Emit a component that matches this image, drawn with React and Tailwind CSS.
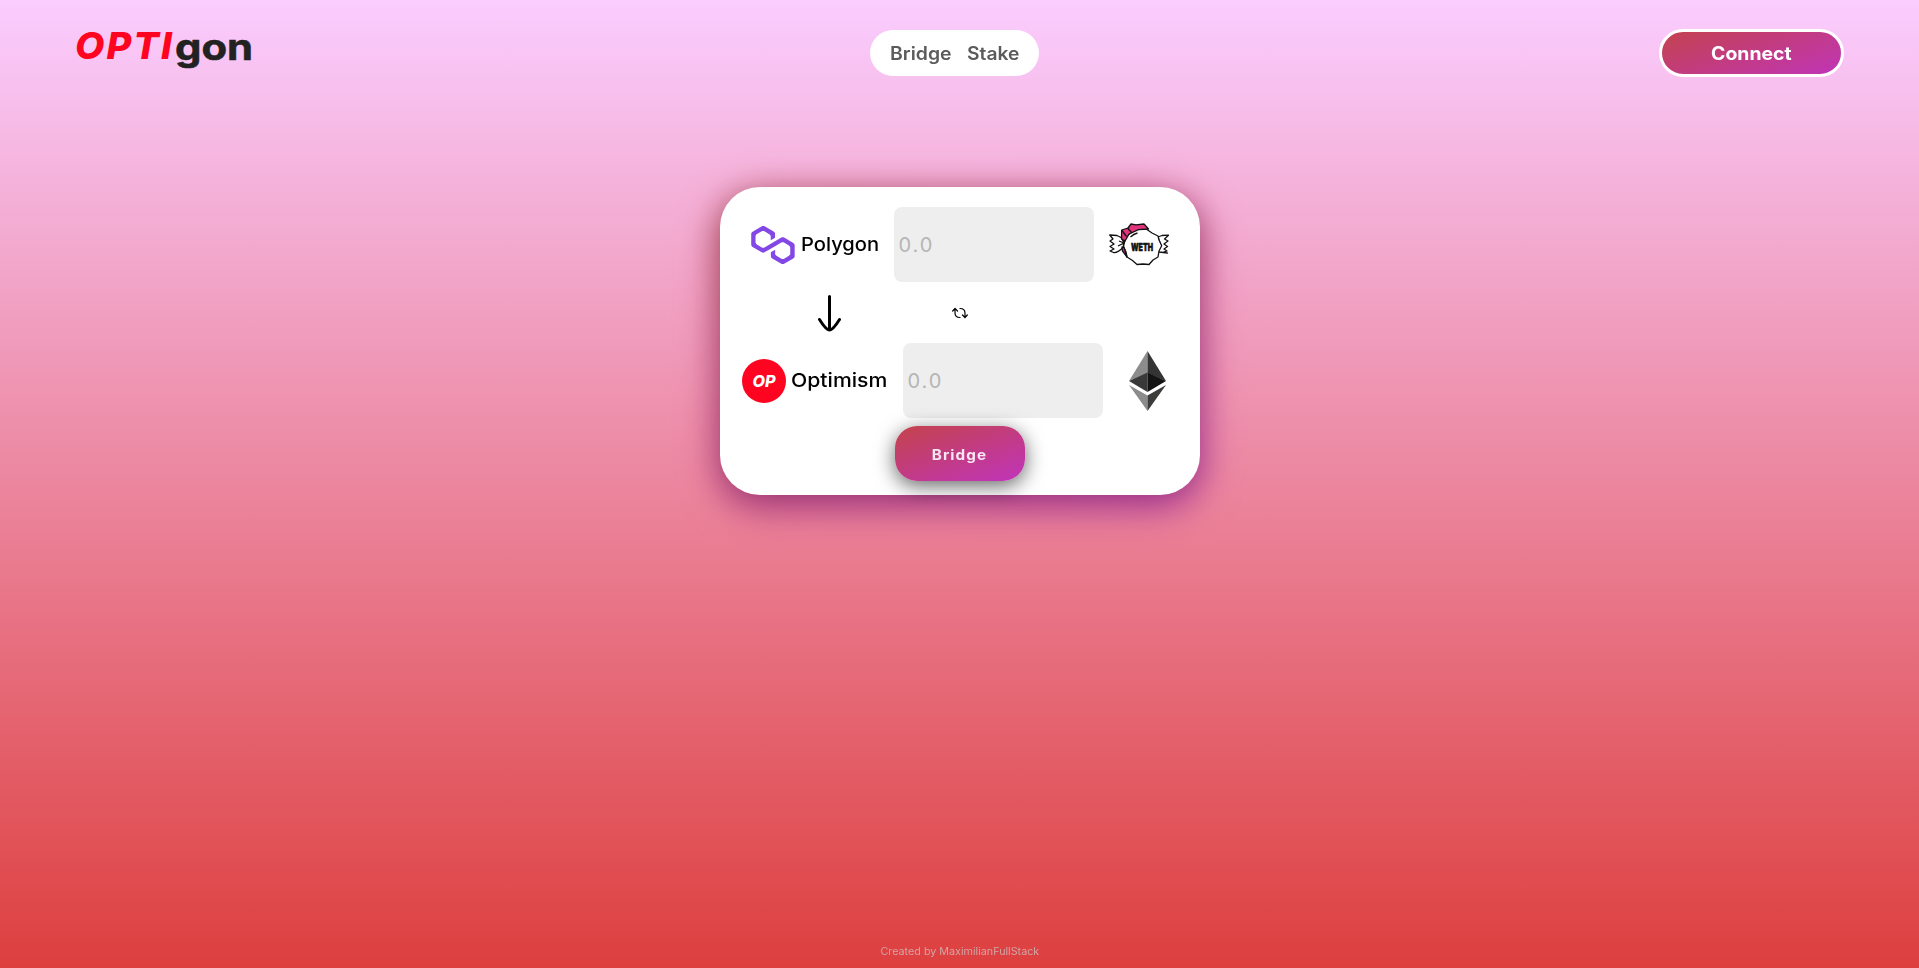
const grad = 'bg-[linear-gradient(160deg,#c4434b,#c034bb)]';

function Polygon() {
  return (
    <svg width="44" height="38" viewBox="0 0 38.4 33.5" className="shrink-0">
      <path fill="#8247e5" d="M29 10.2c-.7-.4-1.6-.4-2.4 0L21 13.5l-3.8 2.1-5.5 3.3c-.7.4-1.6.4-2.4 0L5 16.3c-.7-.4-1.2-1.2-1.2-2.1v-5c0-.8.4-1.6 1.2-2.1l4.3-2.5c.7-.4 1.6-.4 2.4 0L16 7.2c.7.4 1.2 1.2 1.2 2.1v3.3l3.8-2.2V7c0-.8-.4-1.6-1.2-2.1l-8-4.7c-.7-.4-1.6-.4-2.4 0L1.2 5C.4 5.4 0 6.2 0 7v9.4c0 .8.4 1.6 1.2 2.1l8.1 4.7c.7.4 1.6.4 2.4 0l5.5-3.2 3.8-2.2 5.5-3.2c.7-.4 1.6-.4 2.4 0l4.3 2.5c.7.4 1.2 1.2 1.2 2.1v5c0 .8-.4 1.6-1.2 2.1L29 28.8c-.7.4-1.6.4-2.4 0l-4.3-2.5c-.7-.4-1.2-1.2-1.2-2.1V21l-3.8 2.2v3.3c0 .8.4 1.6 1.2 2.1l8.1 4.7c.7.4 1.6.4 2.4 0l8.1-4.7c.7-.4 1.2-1.2 1.2-2.1V17c0-.8-.4-1.6-1.2-2.1L29 10.2z" />
    </svg>
  );
}

function Weth() {
  return (
    <svg width="60" height="44" viewBox="0 0 60 44" className="shrink-0" fill="none" stroke="#111" strokeWidth="1.3" strokeLinejoin="round">
      <path fill="#fff" d="M14 15.500 8 12.500.700 12l3.300 4-3 2 4 3-4 2.500 4 2.500-4 2 3.500 1.500Q9 30 14.500 24z" />
      <path fill="#fff" d="M49 14l4-1.500 6.500-.3-4 3.800 3.500 2-4 3 3.500 2.500-3.500 2.500 3 2-3 1 3.500 1-8.500-1-1.500-2 3.200-5z" />
      <path fill="#fff" d="M14.500 23.500 16 16.500l3-4.500 8-5.500 9.500-1 6.500 4.500 6 3 1 4 2.700 5.700L50 28l-1 6-5 3-4 4.500-6-.500-6 .5-4.500-4L18 34l-1-5z" />
      <path fill="#e0357c" d="M12.700 7 19 5l3-4 5 .800L35 1l4.500 5-10 .700L20 11l-4.500 8-3-3.500zM13 24l2 .500L18 34l-4.500-6z" />
      <path d="M13 7.500l4.500 6M18.500 5l4 4.500M12.500 16.500l3.500 1M9 23l6-3-5-2M21.500 14q3-3 7-4" />
      <text x="22" y="28.200" textLength="22" lengthAdjust="spacingAndGlyphs" fill="#111" stroke="#111" strokeWidth=".6" fontFamily="Inter, sans-serif" fontWeight="900" fontSize="11">WETH</text>
    </svg>
  );
}

function Eth() {
  return (
    <svg width="37" height="60" viewBox="0 0 36 60" preserveAspectRatio="none" className="shrink-0">
      <path fill="#8c8c8c" d="M18 0v22L0 30z" />
      <path fill="#343434" d="M18 0v22l18 8z" />
      <path fill="#393939" d="M18 21.500V41L0 30z" />
      <path fill="#141414" d="M18 21.500V41l18-11z" />
      <path fill="#8c8c8c" d="M0 34l18 10.500V60z" />
      <path fill="#3c3c3b" d="M36 34 18 44.500V60z" />
    </svg>
  );
}

function Amount() {
  return (
    <input
      placeholder="0.0"
      className="h-[75px] w-[200px] shrink-0 rounded-lg bg-[#eee] pl-[5px] text-[20px] tracking-[2px] outline-none placeholder:text-[#b5b5b5]"
    />
  );
}

export default function App() {
  return (
    <div className="flex h-[968px] w-full flex-col items-center overflow-hidden bg-[linear-gradient(180deg,#facdff,#dd3f3e)] font-['Inter',sans-serif]">
      <header className="grid h-[187px] w-full shrink-0 grid-cols-3 items-start px-[75px] pt-[29px]">
        <svg width="180" height="46" className="overflow-visible">
          <text x="0" y="30" textLength="99" lengthAdjust="spacingAndGlyphs" fill="#ff0420" fontFamily="Inter, sans-serif" fontWeight="800" fontStyle="italic" fontSize="37" letterSpacing="2">OPTI</text>
          <text x="100" y="30.500" textLength="78" lengthAdjust="spacingAndGlyphs" fill="#222" stroke="#222" strokeWidth=".6" fontFamily="Inter, sans-serif" fontWeight="700" fontSize="37">gon</text>
        </svg>
        <nav className="relative right-[5px] mt-px flex h-[46px] w-[169px] items-center justify-self-center rounded-full bg-white pl-5 text-[18px] font-semibold text-[#5b5b5b]">
          <a className="w-[77px]"><span className="inline-block origin-left scale-x-[1.08]">Bridge</span></a>
          <a><span className="inline-block origin-left scale-x-[1.07]">Stake</span></a>
        </nav>
        <button className={`flex h-12 w-[185px] items-center justify-center justify-self-end rounded-full border-[3px] border-white bg-origin-border pt-px text-[18.5px] font-bold text-white ${grad}`}>
          <span className="scale-x-[1.05]">Connect</span>
        </button>
      </header>

      <main className="relative h-[308px] w-[480px] shrink-0">
        <div className={`absolute inset-0 translate-y-[10px] rounded-[40px] blur-[20px] brightness-90 ${grad}`} />
        <section className="relative flex h-full flex-col items-center rounded-[40px] bg-white pt-5 shadow-[0_8px_30px_rgba(0,0,0,0.14)]">
          <div className="flex h-[75px] w-full items-center pl-[31px]">
            <Polygon />
            <div className="w-[99px] pl-1.5 pt-0.5 text-[19px] font-medium"><span className="inline-block origin-left scale-x-[1.06]">Polygon</span></div>
            <Amount />
            <div className="ml-[15px] pt-px"><Weth /></div>
          </div>
          <div className="grid h-[61px] w-full grid-cols-[220px_40px_1fr] items-center">
            <svg width="24" height="38" viewBox="0 0 24 38" className="ml-[98px]" fill="none" stroke="#000" strokeWidth="3" strokeLinecap="round" strokeLinejoin="round">
              <path d="M11.500 2.500V35.500M1.500 25.500Q8 36 11.500 36T21.500 25.500" />
            </svg>
            <svg width="16" height="12" viewBox="0 0 16 12" className="justify-self-center" fill="none" stroke="#000" strokeWidth="1.2" strokeLinecap="round" strokeLinejoin="round">
              <path d="M.7 4 3 1.300 5.500 4M3 1.300V6q0 4.500 5 4.500M15.300 8 13 10.700 10.500 8M13 10.700V6q0-4.500-5-4.500" />
            </svg>
          </div>
          <div className="flex h-[75px] w-full shrink-0 items-center pl-[22px]">
            <svg width="44" height="44" viewBox="0 0 44 44" className="shrink-0">
              <circle cx="22" cy="22" r="22" fill="#ff0420" />
              <text x="10.500" y="28" textLength="23" lengthAdjust="spacingAndGlyphs" fill="#fff" fontFamily="Inter, sans-serif" fontWeight="800" fontStyle="italic" fontSize="16.500">OP</text>
            </svg>
            <div className="w-[117px] pl-[5px] pt-0.5 text-[19px] font-medium"><span className="inline-block origin-left scale-x-[1.115]">Optimism</span></div>
            <Amount />
            <div className="ml-[26px]"><Eth /></div>
          </div>
          <button className={`mt-2 flex h-[55px] w-[130px] shrink-0 items-center justify-center rounded-[22px] text-[14px] font-bold tracking-[1px] text-[#f8e6f2] shadow-[0_5px_20px_rgba(0,0,0,0.6)] ${grad}`}>
            <span className="scale-x-[1.09] pt-px">Bridge</span>
          </button>
        </section>
      </main>
      <footer className="mt-auto h-6 text-[10px] text-[#d3a5a5]">
        <span className="inline-block scale-x-[1.075]">Created by MaximilianFullStack</span>
      </footer>
    </div>
  );
}
